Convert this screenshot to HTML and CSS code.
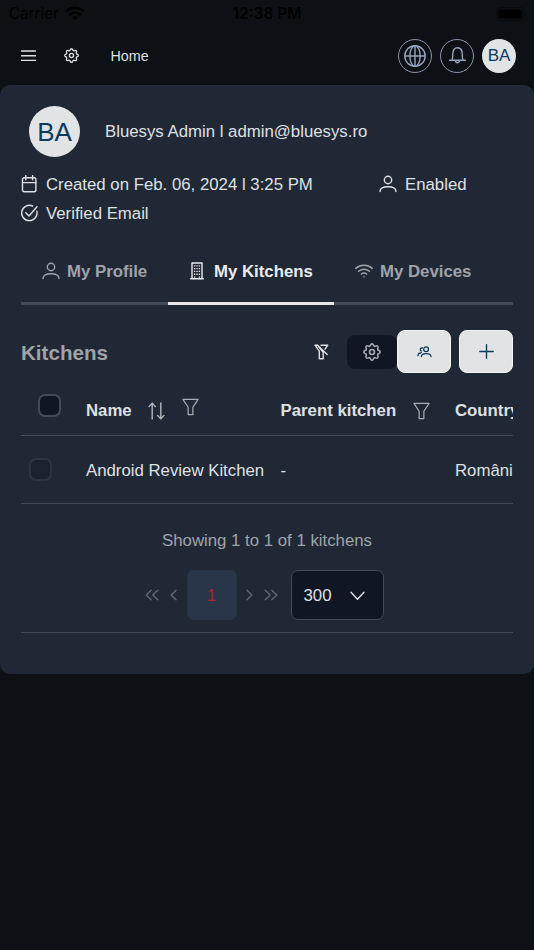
FILE: index.html
```html
<!DOCTYPE html>
<html lang="en">
<head>
    <meta charset="UTF-8">
    <meta name="viewport" content="width=device-width, initial-scale=1.0">
    <title>My Kitchens</title>
    <link rel="stylesheet" href="styles.css">
</head>
<body>
    <!-- shared icons -->
    <svg class="icon-defs" width="0" height="0">
        <symbol id="gear" viewBox="0 0 16 16">
            <path d="M6.7 1.9C7.1.4 8.9.4 9.3 1.9a1.35 1.35 0 0 0 2.05.85c1.3-.75 2.6.55 1.9 1.85a1.35 1.35 0 0 0 .85 2.05c1.5.4 1.5 2.3 0 2.7a1.35 1.35 0 0 0-.85 2.05c.7 1.3-.6 2.6-1.9 1.85a1.35 1.35 0 0 0-2.05.85c-.4 1.5-2.2 1.5-2.6 0a1.35 1.35 0 0 0-2.05-.85c-1.3.75-2.6-.55-1.9-1.85A1.35 1.35 0 0 0 1.9 9.35c-1.5-.4-1.5-2.3 0-2.7a1.35 1.35 0 0 0 .85-2.05c-.7-1.3.6-2.6 1.9-1.85A1.35 1.35 0 0 0 6.7 1.9z"/>
            <circle cx="8" cy="8" r="2.2"/>
        </symbol>
        <symbol id="person" viewBox="0 0 18 18">
            <circle cx="9" cy="5" r="3.7"/>
            <path d="M1 16.6c0-3 3-4.9 8-4.9s8 1.9 8 4.9"/>
        </symbol>
        <symbol id="funnel" viewBox="0 0 18 18">
            <path d="M1 1h16l-5.5 8.3V17h-5V9.3z"/>
        </symbol>
    </svg>

    <div class="status-bar">
        <div class="carrier">
            <span>Carrier</span>
            <svg width="20" height="15" viewBox="0 0 20 15" fill="none" stroke="#000" stroke-width="2.7">
                <path d="M1 5.5a13 13 0 0 1 18 0M4.2 9a8.5 8.5 0 0 1 11.6 0"/>
                <path d="M10 14.5l-3-3.2a4.5 4.5 0 0 1 6 0z" fill="#000" stroke="none"/>
            </svg>
        </div>
        <div class="time">12:38 PM</div>
        <svg class="battery" width="31" height="14" viewBox="0 0 31 14">
            <rect x=".7" y=".7" width="27" height="12.6" rx="3.8" fill="none" stroke="#07090b" stroke-width="1.2"/>
            <rect x="2.5" y="2.5" width="23.4" height="9" rx="2"/>
            <path d="M29.2 5v4c1.6-.6 1.6-3.4 0-4z" fill="#07090b"/>
        </svg>
    </div>

    <header>
        <svg class="icon menu" width="15" height="12" viewBox="0 0 15 12"><path d="M.5 1h14M.5 5.7h14M.5 10.4h14"/></svg>
        <svg class="icon settings" width="15" height="15"><use href="#gear"/></svg>
        <a href="#" class="home">Home</a>
        <div class="header-actions">
            <a href="#" class="round">
                <svg class="icon" width="22" height="22" viewBox="0 0 22 22"><circle cx="11" cy="11" r="10.2"/><ellipse cx="11" cy="11" rx="5.2" ry="10.2"/><path d="M11 .8v20.4M.8 11h20.4"/></svg>
            </a>
            <a href="#" class="round">
                <svg class="icon bell" width="17" height="17" viewBox="0 0 17 17"><path d="M.5 13.3h16M2.8 13.3c.8-1 .9-2.2.9-5.8C3.7 3 5.4.8 8.5.8s4.8 2.2 4.8 6.7c0 3.6.1 4.8.9 5.8M6.5 13.8c.2 2.6 3.8 2.6 4 0"/></svg>
            </a>
            <div class="avatar small">BA</div>
        </div>
    </header>

    <main class="card">
        <div class="user">
            <div class="avatar">BA</div>
            <span>Bluesys Admin l admin@bluesys.ro</span>
        </div>
        <div class="details">
            <div class="detail created">
                <svg class="icon" width="17" height="18" viewBox="0 0 17 18"><rect x="1.5" y="2.8" width="13.4" height="14" rx="1.8"/><path d="M1.5 7.6h13.4M4.8.6v4.2M11.6.6v4.2"/></svg>
                <span>Created on Feb. 06, 2024 l 3:25 PM</span>
            </div>
            <div class="detail">
                <svg class="icon" width="18" height="18"><use href="#person"/></svg>
                <span>Enabled</span>
            </div>
        </div>
        <div class="detail">
            <svg class="icon" width="17" height="18" viewBox="0 0 17 18"><path d="M15.9 7.3A7.7 7.7 0 1 1 11.7 2M4.8 8.8l3.2 3.2 8-9.2"/></svg>
            <span>Verified Email</span>
        </div>

        <nav class="tabs">
            <a href="#" class="tab profile">
                <svg class="icon" width="18" height="18"><use href="#person"/></svg>
                <span>My Profile</span>
            </a>
            <a href="#" class="tab kitchens active">
                <svg class="icon building" width="14" height="18" viewBox="0 0 14 18"><path d="M.7 16.8h12.6M2 16.8V1h10v15.8"/><path class="dots" d="M4.6 3.2v13M7 3.2v10M9.4 3.2v13"/></svg>
                <span>My Kitchens</span>
            </a>
            <a href="#" class="tab devices">
                <svg class="icon" width="18" height="14" viewBox="0 0 18 14"><path d="M.8 4.4a12.4 12.4 0 0 1 16.4 0M3.6 7.3a8.3 8.3 0 0 1 10.8 0M6.4 10a4.2 4.2 0 0 1 5.2 0"/><circle cx="9" cy="12.7" r=".2"/></svg>
                <span>My Devices</span>
            </a>
        </nav>

        <div class="toolbar">
            <h2>Kitchens</h2>
            <svg class="icon filter-off" width="15" height="16" viewBox="0 0 15 16"><path d="M1 1.2l4.3 6v7.6h3.9V8.2M1 1.2h2.6l9.6 9.4M7 1.2h6.8l-2.8 4M3.6 1.2L9.2 8.2"/></svg>
            <button class="btn-dark"><svg class="icon" width="18" height="18"><use href="#gear"/></svg></button>
            <button class="btn-light"><svg class="icon" width="15" height="12" viewBox="0 0 16 13"><circle cx="9.7" cy="3.6" r="2.6"/><path d="M4.6 11.4c.4-4.2 9.9-4.2 10.5 0M5.9 2.1C4 1.8 3 3.2 3.6 4.5c.2.5.5.8.9 1M.9 10.5c.1-1.9 1.3-2.9 3.6-3.3"/></svg></button>
            <button class="btn-light add"><svg class="icon" width="15" height="15" viewBox="0 0 15 15"><path d="M7.5.8v13.4M.8 7.5h13.4"/></svg></button>
        </div>

        <div class="table">
            <div class="row head">
                <div class="check"><span class="checkbox"></span></div>
                <div class="cell">
                    <span>Name</span>
                    <svg class="icon sort" width="17" height="18" viewBox="0 0 17 18"><path d="M4.2 17V1.2M1 4.6l3.2-3.5 3.2 3.5M12.8 1v15.8M9.6 13.4l3.2 3.5 3.2-3.5"/></svg>
                    <svg class="icon funnel raised" width="17" height="18"><use href="#funnel"/></svg>
                </div>
                <div class="cell">
                    <span>Parent kitchen</span>
                    <svg class="icon funnel" width="17" height="18"><use href="#funnel"/></svg>
                </div>
                <div class="cell">Country</div>
            </div>
            <div class="row">
                <div class="check"><span class="checkbox"></span></div>
                <div class="cell">Android Review Kitchen</div>
                <div class="cell">-</div>
                <div class="cell">România</div>
            </div>
        </div>

        <div class="pagination">
            <p>Showing 1 to 1 of 1 kitchens</p>
            <div class="pages">
                <svg class="icon" width="14" height="12" viewBox="0 0 14 12"><path d="M6.2 1.2L1.2 6l5 4.8M12.8 1.2L7.8 6l5 4.8"/></svg>
                <svg class="icon prev" width="7" height="12" viewBox="0 0 7 12"><path d="M6 1.2L1.2 6 6 10.8"/></svg>
                <span class="page">1</span>
                <svg class="icon next" width="7" height="12" viewBox="0 0 7 12"><path d="M1 1.2L5.8 6 1 10.8"/></svg>
                <svg class="icon" width="14" height="12" viewBox="0 0 14 12"><path d="M1.2 1.2l5 4.8-5 4.8M7.8 1.2l5 4.8-5 4.8"/></svg>
                <div class="select">
                    <span>300</span>
                    <svg class="icon" width="15" height="10" viewBox="0 0 15 10"><path d="M1 1.3l6.5 6.9L14 1.3"/></svg>
                </div>
            </div>
        </div>
    </main>
</body>
</html>
```

FILE: styles.css
```css
* {
    box-sizing: border-box;
}
body {
    font-family: "Liberation Sans", Arial, sans-serif;
    font-size: 16.8px;
    line-height: 20px;
    margin: 0;
    min-height: 950px;
    background-color: #0d1115;
    color: #dfe0e2;
}
a {
    color: inherit;
    text-decoration: none;
}
.icon-defs {
    display: block;
}
.icon {
    fill: none;
    stroke: currentColor;
    stroke-width: 1.4;
    stroke-linecap: round;
    stroke-linejoin: round;
    flex-shrink: 0;
}

/* status bar */
.status-bar {
    display: grid;
    grid-template-columns: 1fr auto 1fr;
    align-items: center;
    height: 28px;
    padding: 0 7px 0 9px;
    font-family: Inter, sans-serif;
    font-size: 15.5px;
    color: #000;
}
.carrier {
    display: flex;
    align-items: center;
    gap: 6px;
    padding-bottom: 1px;
    font-size: 15.2px;
}
.carrier span {
    padding-top: 1px;
}
.time {
    margin: 0 2px 0 0;
    font-weight: 600;
}
.battery {
    justify-self: end;
}

/* header */
header {
    display: flex;
    align-items: center;
    height: 57px;
    padding: 0 18px 2px 21px;
}
.settings {
    margin-left: 28px;
}
.home {
    margin-left: 31.5px;
    font-size: 14.3px;
}
.header-actions {
    display: flex;
    gap: 8px;
    margin-left: auto;
}
.round {
    display: flex;
    align-items: center;
    justify-content: center;
    width: 34px;
    height: 34px;
    border: 1px solid #8593aa;
    border-radius: 50%;
    color: #94a3bd;
}
.avatar {
    display: flex;
    align-items: center;
    justify-content: center;
    width: 51px;
    height: 51px;
    border-radius: 50%;
    background-color: #e2e3e5;
    color: #0b3b5a;
    font-size: 26px;
}
.avatar.small {
    width: 34px;
    height: 34px;
    padding-top: 1px;
    font-size: 17px;
}

/* card */
.card {
    height: 589px;
    padding: 21px 21px 0;
    border-radius: 10px;
    background-color: #202836;
}
.user {
    display: flex;
    align-items: center;
    gap: 25px;
    padding-left: 8px;
    margin-bottom: 13px;
}
.user span {
    padding-top: 1px;
}
.details {
    display: flex;
}
.created {
    width: 358px;
}
.detail {
    display: flex;
    align-items: center;
    gap: 8px;
    height: 28.5px;
}
.detail span {
    padding-top: 2px;
}

/* tabs */
.tabs {
    display: flex;
    height: 78px;
    border-bottom: 3px solid #444b58;
    font-weight: bold;
    color: #9fa3a9;
    white-space: nowrap;
}
.tab {
    display: flex;
    align-items: center;
    height: 78px;
    gap: 8px;
    padding: 15px 0 3px 21px;
}
.tab .icon {
    margin-bottom: 3px;
}
.profile {
    width: 147px;
}
.profile .icon {
    margin-right: -1px;
}
.kitchens {
    width: 166px;
    gap: 10px;
    padding-left: 22px;
}
.devices .icon {
    margin-right: -1px;
}
.active {
    border-bottom: 3px solid #e6e6e8;
    padding-bottom: 0;
    color: #ececee;
}
.building .dots {
    stroke-width: 1.3;
    stroke-dasharray: 1.3 1.5;
    stroke-linecap: butt;
}

/* toolbar */
.toolbar {
    display: flex;
    align-items: center;
    height: 43px;
    margin-top: 25px;
}
h2 {
    flex: 1;
    margin: 0;
    padding-top: 2px;
    font-size: 20.6px;
    color: #9fa3a9;
}
.filter-off {
    margin-right: 18px;
}
button {
    display: flex;
    align-items: center;
    justify-content: center;
    padding: 0;
    border: none;
}
.btn-dark {
    width: 50px;
    height: 34px;
    border-radius: 8px;
    background-color: #101624;
    color: #a9acb2;
}
.btn-light {
    width: 54px;
    height: 43px;
    border: 1.5px solid #f5f5f6;
    border-radius: 8px;
    background-color: #e2e3e5;
    color: #0b3b5a;
}
.add {
    margin-left: 8px;
}

/* table */
.table {
    overflow: hidden;
    margin-top: 11px;
}
.row {
    display: grid;
    grid-template-columns: 65px 194.5px 174.5px 90px;
    align-items: center;
    height: 68px;
    border-bottom: 1px solid #444b58;
}
.head {
    height: 52px;
    font-weight: bold;
}
.cell {
    display: flex;
    align-items: center;
    padding-top: 2px;
    white-space: nowrap;
}
.checkbox {
    display: block;
    width: 23px;
    height: 23px;
    margin-left: 8px;
    border: 2px solid #2c3442;
    border-radius: 7px;
    background-color: #1a222f;
}
.head .checkbox {
    margin: 0 0 9px 17px;
    border-color: #444b58;
    background-color: #101624;
}
.sort {
    margin-left: 16px;
    color: #b5b8bd;
}
.funnel {
    margin-left: 17px;
    color: #a9acb2;
    stroke-width: 1.3;
}
.raised {
    margin-bottom: 7px;
}

/* pagination */
.pagination {
    height: 129px;
    padding-top: 27px;
    border-bottom: 1px solid #444b58;
    color: #9fa3a9;
}
.pagination p {
    margin: 0;
    text-align: center;
}
.pages {
    display: flex;
    align-items: center;
    justify-content: center;
    margin-top: 19px;
    padding-right: 6px;
    color: #626974;
}
.prev {
    margin: 0 10px 0 11px;
}
.page {
    width: 50px;
    height: 50px;
    border-radius: 7px;
    background-color: #293548;
    color: #b51f31;
    line-height: 51px;
    text-align: center;
}
.next {
    margin: 0 11px 0 9px;
}
.select {
    display: flex;
    align-items: center;
    justify-content: space-between;
    width: 93px;
    height: 50px;
    margin-left: 13px;
    padding: 1px 18px 0 12px;
    border: 1px solid #444b58;
    border-radius: 7px;
    background-color: #101624;
    color: #dfe0e2;
}
```
